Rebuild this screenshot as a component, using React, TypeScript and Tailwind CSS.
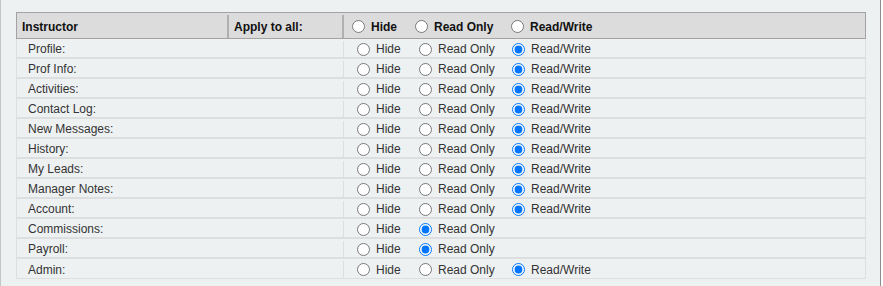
import React from 'react';

type Access = 'hide' | 'ro' | 'rw';

const rows: { label: string; value: Access; noWrite?: boolean }[] = [
  { label: 'Profile:', value: 'rw' },
  { label: 'Prof Info:', value: 'rw' },
  { label: 'Activities:', value: 'rw' },
  { label: 'Contact Log:', value: 'rw' },
  { label: 'New Messages:', value: 'rw' },
  { label: 'History:', value: 'rw' },
  { label: 'My Leads:', value: 'rw' },
  { label: 'Manager Notes:', value: 'rw' },
  { label: 'Account:', value: 'rw' },
  { label: 'Commissions:', value: 'ro', noWrite: true },
  { label: 'Payroll:', value: 'ro', noWrite: true },
  { label: 'Admin:', value: 'rw' },
];

const Radio: React.FC<{ checked?: boolean; name: string }> = ({ checked, name }) => (
  <input
    type="radio"
    name={name}
    defaultChecked={checked}
    className="m-0 h-[13px] w-[13px] shrink-0"
  />
);

const App: React.FC = () => {
  return (
    <div
      className="h-[286px] w-[881px] border-l border-r border-l-[#c4c6c8] border-r-[#8c8c8c] bg-[#eef1f2] pl-[15px] pt-[12px] text-[12px]"
      style={{ fontFamily: '"Liberation Sans", Arial, sans-serif' }}
    >
      <div className="w-[850px]">
        {/* header */}
        <div className="flex h-[27px] border border-[#a3a3a3] bg-[#dcdcdc] pt-[2px] font-bold text-[#111]">
          <div className="flex w-[212px] shrink-0 items-center border-r-2 border-[#b0b0b0] pl-[5px]">Instructor</div>
          <div className="flex w-[115px] shrink-0 items-center border-r-2 border-[#b0b0b0] pl-[5px]">Apply to all:</div>
          <div className="flex flex-1 items-center pl-[8px]">
            <label className="flex w-[63px] items-center gap-[6px]">
              <Radio name="all" />
              Hide
            </label>
            <label className="flex w-[96px] items-center gap-[6px]">
              <Radio name="all" />
              Read Only
            </label>
            <label className="flex items-center gap-[6px]">
              <Radio name="all" />
              Read/Write
            </label>
          </div>
        </div>

        {/* rows */}
        {rows.map((row, i) => (
          <div
            key={row.label}
            className={`flex h-[20px] border-x border-[#dcdedf] pt-[2px] text-[#333] ${
              i === rows.length - 1 ? 'border-b' : 'border-b-2'
            }`}
          >
            <div className="flex w-[327px] shrink-0 items-center border-r border-[#dcdedf] pl-[11px]">{row.label}</div>
            <div className="flex flex-1 items-center pl-[13px]">
              <label className="flex w-[62px] items-center gap-[6px]">
                <Radio name={`r${i}`} checked={row.value === 'hide'} />
                Hide
              </label>
              <label className="flex w-[93px] items-center gap-[6px]">
                <Radio name={`r${i}`} checked={row.value === 'ro'} />
                Read Only
              </label>
              {!row.noWrite && (
                <label className="flex items-center gap-[6px]">
                  <Radio name={`r${i}`} checked={row.value === 'rw'} />
                  Read/Write
                </label>
              )}
            </div>
          </div>
        ))}
      </div>
    </div>
  );
};

export default App;
